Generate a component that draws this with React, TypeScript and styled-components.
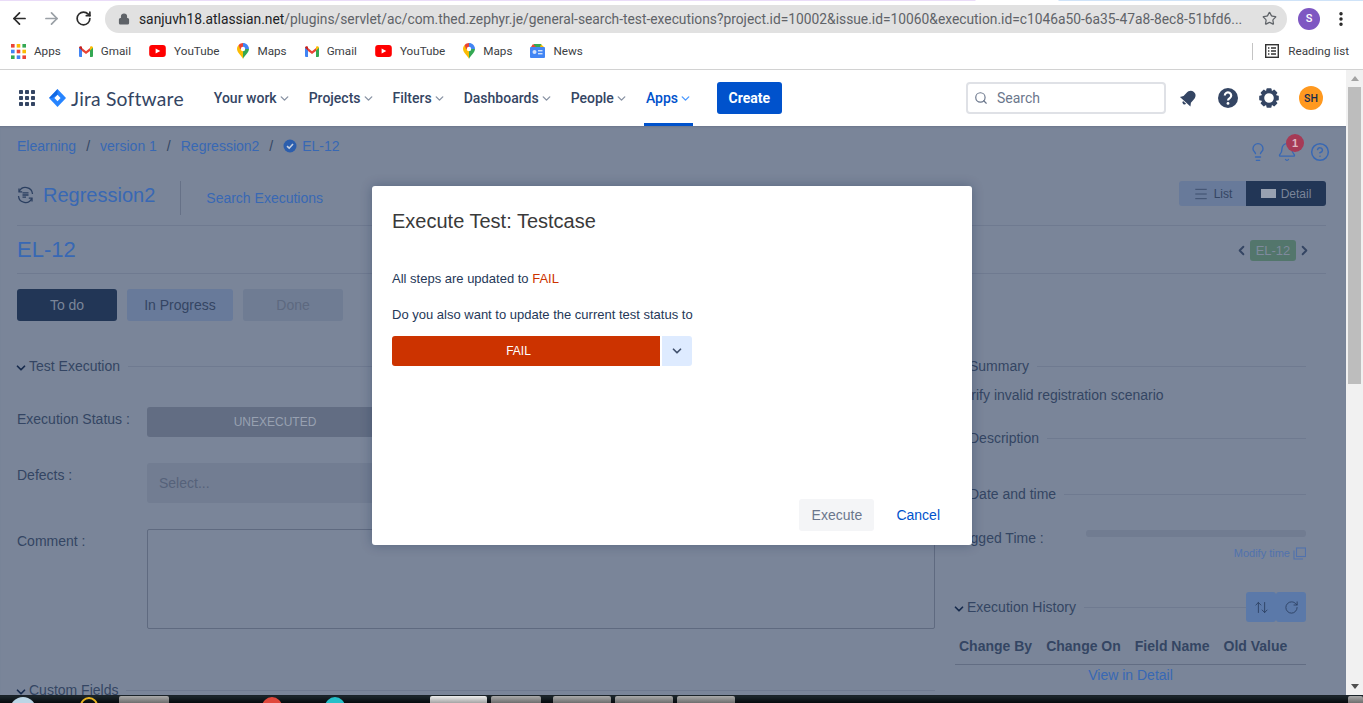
import React from "react";
import styled, { createGlobalStyle } from "styled-components";
import { ArrowLeft, ArrowRight, RotateCw, Lock, Star, MoreVertical, ChevronDown, ChevronLeft, ChevronRight, Search, HelpCircle, Bell, Lightbulb, Menu, ArrowUpDown, RotateCw as Refresh } from "lucide-react";

const Global = createGlobalStyle`
  html, body { margin: 0; padding: 0; height: 100%; overflow: hidden; background: #fff; }
  * { box-sizing: border-box; }
`;

const Screen = styled.div`
  position: relative; width: 1363px; height: 703px; overflow: hidden; display: flex; flex-direction: column;
  font-family: "Liberation Sans", Arial, sans-serif; background: #fff;
`;
const TopTint = styled.div`
  height: 1px; flex: none;
  background: linear-gradient(90deg, #eadcf8 0, #eadcf8 975px, #fff 976px, #fff 1058px, #cfe3f8 1059px, #cfe3f8 100%);
`;
const Toolbar = styled.div`
  height: 35px; flex: none; display: flex; align-items: center; padding: 0 0 0 6px; background: #fff; color: #333;
`;
const NavIcon = styled.span<{ $muted?: boolean }>`
  width: 26px; height: 26px; margin-right: 6px; display: flex; align-items: center; justify-content: center;
  color: ${(p) => (p.$muted ? "#9aa0a6" : "#2b2b2b")};
`;
const Omnibox = styled.div`
  width: 1182px; height: 28px; margin-left: 3px; border-radius: 14px; background: #e1e1e1; display: flex; align-items: center;
  padding-left: 13px; padding-right: 10px; color: #5f6368; font: 400 13.8px Roboto, sans-serif; white-space: nowrap;
`;
const Url = styled.span`
  margin-left: 9px; flex: 1; overflow: hidden;
  b { font-weight: 400; color: #202124; }
`;
const Profile = styled.span`
  width: 22px; height: 22px; border-radius: 50%; background: #7e57c2; color: #fff; margin-left: 11px;
  display: flex; align-items: center; justify-content: center; font: 500 11px Roboto, sans-serif;
`;
const Kebab = styled.span`
  margin-left: 12px; color: #222; display: flex;
`;
const Bookmarks = styled.div`
  height: 34px; flex: none; display: flex; align-items: center; padding: 0 14px 3px 11px; gap: 18px; background: #fff;
  border-bottom: 1px solid #d2d2d2; font: 400 11.7px Roboto, sans-serif; color: #3c4043;
`;
const Mark = styled.span`
  display: flex; align-items: center; gap: 8px; white-space: nowrap;
`;
const ReadingList = styled.span`
  margin-left: auto; height: 17px; border-left: 1px solid #c4c4c4; padding-left: 12px; display: flex; align-items: center; gap: 9px;
`;
const Workspace = styled.div`
  flex: 1; min-height: 0; display: flex;
`;
const Window = styled.div`
  flex: 1; min-width: 0; display: flex; flex-direction: column;
`;
const JiraNav = styled.header`
  height: 56px; flex: none; background: #fff; display: flex; align-items: center; padding-left: 19px;
  font: 500 14px Roboto, sans-serif; color: #344563; position: relative;
`;
const LogoWrap = styled.div`
  display: flex; align-items: center; margin-left: 14px; margin-right: 30px;
`;
const LogoText = styled.span`
  font: 400 19.3px Lato, sans-serif; color: #344563; margin-left: 5px; letter-spacing: 0.2px;
`;
const Menus = styled.nav`
  display: flex; align-items: stretch; height: 56px; gap: 18px;
`;
const MenuItem = styled.span<{ $active?: boolean }>`
  display: flex; align-items: center; gap: 1px; white-space: nowrap; position: relative; width: ${(p) => (p.$active ? "47px" : "auto")};
  color: ${(p) => (p.$active ? "#0052cc" : "#344563")};
  svg { color: ${(p) => (p.$active ? "#4c9aff" : "#8993a4")}; }
  ${(p) => p.$active && `&::after { content: ""; position: absolute; left: -2px; right: 0; bottom: 0; height: 3px; background: #0052cc; }`}
`;
const CreateBtn = styled.span`
  width: 65px; height: 32px; margin-left: 24px; background: #0052cc; color: #fff; border-radius: 3px; display: flex;
  align-items: center; justify-content: center; font-weight: 700; font-size: 14px;
`;
const SearchBox = styled.div`
  width: 200px; height: 32px; margin-left: auto; border: 2px solid #dfe1e6; border-radius: 4px; display: flex; align-items: center;
  padding-left: 6px; gap: 9px; font: 400 14px Roboto, sans-serif; color: #6b778c;
`;
const NavActions = styled.div`
  display: flex; align-items: center; margin-left: 13px; width: 167px; color: #344563; gap: 19px;
`;
const AvatarSH = styled.span`
  width: 24px; height: 24px; border-radius: 50%; background: #ff991f; color: #172b4d; font: 500 10.5px Roboto, sans-serif;
  display: flex; align-items: center; justify-content: center;
`;
const Page = styled.main`
  flex: 1; min-height: 0; overflow: hidden; background: #7a8599; padding: 0 20px 0 17px; color: #344563; font-size: 14px;
  box-shadow: inset 0 2px 2px -1px #6c778c;
`;
const Crumbs = styled.div`
  height: 40px; display: flex; align-items: center; color: #3868b4; white-space: nowrap;
`;
const CrumbSep = styled.span`
  margin: 0 10px; color: #344563;
`;
const CrumbTail = styled.span`
  display: flex; align-items: center; gap: 5px;
`;
const CornerIcons = styled.div`
  margin-left: auto; margin-right: -4px; display: flex; align-items: center; gap: 9px; color: #3868b4; margin-top: 12px; position: relative;
  svg:last-child { margin-left: 4px; }
`;
const Badge = styled.span`
  position: absolute; left: 38px; top: -8px; width: 18px; height: 18px; border-radius: 50%; background: #a63a56; color: #dfb6c0;
  font-size: 11px; font-weight: 700; display: flex; align-items: center; justify-content: center;
`;
const HeadRow = styled.div`
  height: 60px; border-bottom: 1px solid #6f7a90; display: flex; align-items: flex-start; padding-top: 15px;
`;
const HeadTitle = styled.div`
  display: flex; align-items: center; gap: 9px; font-size: 20px; color: #3868b4; height: 34px; padding: 0 25px 6px 0; border-right: 1px solid #667187;
`;
const HeadLink = styled.span`
  margin: 9px 0 0 25px; color: #3868b4; line-height: 16px;
`;
const Segment = styled.div`
  margin-left: auto; display: flex; height: 25px; font-size: 12px; border-radius: 3px; overflow: hidden;
`;
const SegBtn = styled.span<{ $on?: boolean }>`
  width: ${(p) => (p.$on ? "80px" : "67px")}; display: flex; align-items: center; justify-content: center; gap: 5px;
  background: ${(p) => (p.$on ? "#223656" : "#687a9a")}; color: ${(p) => (p.$on ? "#7a8599" : "#344563")};
`;
const DetailGlyph = styled.span`
  width: 15px; height: 9px; background: #98a1b1;
`;
const IssueRow = styled.div`
  height: 48px; border-bottom: 1px solid #6f7a90; display: flex; align-items: center; color: #3868b4; font-size: 22px;
  padding-right: 14px;
`;
const Pager = styled.div`
  margin-left: auto; margin-top: 2px; display: flex; align-items: center; gap: 1px; color: #344563;
`;
const Lozenge = styled.span`
  width: 46px; height: 21px; background: #53766c; color: #7f8a9d; border-radius: 3px; font-size: 13px;
  display: flex; align-items: center; justify-content: center;
`;
const StatusRow = styled.div`
  display: flex; gap: 10px; margin-top: 15px;
`;
const StatusBtn = styled.span<{ $v: "dark" | "mid" | "off" }>`
  width: ${(p) => (p.$v === "mid" ? "106px" : "100px")}; height: 32px; border-radius: 3px; display: flex; align-items: center; justify-content: center;
  background: ${(p) => (p.$v === "dark" ? "#223656" : p.$v === "mid" ? "#687a9a" : "#6f7c93")};
  color: ${(p) => (p.$v === "dark" ? "#7a8599" : p.$v === "mid" ? "#344563" : "#5d6980")};
`;
const Columns = styled.div`
  display: flex; gap: 20px; margin-top: 34px;
`;
const LeftCol = styled.section`
  width: 918px; flex: none;
`;
const RightCol = styled.section`
  width: 351px; flex: none;
`;
const SectionHead = styled.div<{ $mt?: number; $indent?: number }>`
  height: 22px; display: flex; align-items: center; gap: 8px; white-space: nowrap; color: #344563;
  margin-top: ${(p) => p.$mt ?? 0}px; padding-left: ${(p) => p.$indent ?? 0}px;
  &::after { content: ""; flex: 1; height: 1px; background: #6f7a90; }
`;
const Caret = styled.span`
  display: inline-flex; margin: 3px -7px 0 -3px; color: #172b4d;
`;
const FieldRow = styled.div<{ $h: number; $mt: number }>`
  display: flex; height: ${(p) => p.$h}px; margin-top: ${(p) => p.$mt}px;
`;
const FieldLabel = styled.label`
  width: 130px; flex: none; padding-top: 4px;
`;
const StatusField = styled.span`
  width: 256px; height: 30px; background: #626d83; color: #98a1b1; border-radius: 3px; font-size: 12px; display: flex; align-items: center; justify-content: center;
`;
const SelectField = styled.span`
  width: 400px; height: 40px; background: #727d92; color: #56627a; border-radius: 3px; padding-left: 12px; display: flex; align-items: center;
`;
const Textarea = styled.div`
  width: 788px; height: 100px; border: 1px solid #5f6a80; border-radius: 2px;
`;
const SummaryText = styled.p`
  margin: 10px 0 0 0; height: 22px; white-space: nowrap; color: #344563;
`;
const LoggedRow = styled.div`
  display: flex; align-items: flex-start; margin-top: 25px; height: 22px;
`;
const LoggedLabel = styled.span`
  width: 131px; flex: none;
`;
const TimeBar = styled.span`
  flex: 1; height: 7px; margin-top: 0; border-radius: 3px; background: #717c91;
`;
const ModifyRow = styled.div`
  display: flex; justify-content: flex-end; align-items: center; gap: 3px; color: #5172ad; font-size: 11px; height: 16px; margin-top: -7px;
`;
const HistoryHead = styled.div`
  display: flex; align-items: center; height: 30px; margin-top: 31px; gap: 8px;
`;
const HistLine = styled.span`
  flex: 1; height: 1px; background: #6f7a90; margin-right: -8px;
`;
const IconBtn = styled.span<{ $joined?: boolean }>`
  width: 30px; height: 30px; background: #5b79a9; border-radius: 3px; display: flex; align-items: center; justify-content: center; color: #2b3f60;
  margin-left: ${(p) => (p.$joined ? "-8px" : "0")};
`;
const HistoryTable = styled.div`
  display: flex; gap: 14px; padding-left: 4px; margin-top: 15px; height: 28px; font-weight: 700; border-bottom: 1px solid #626d83; white-space: nowrap; padding-top: 1px; color: #344563; align-items: flex-start;
`;
const ViewDetail = styled.div`
  text-align: center; color: #3868b4; padding-top: 2px;
`;
const ScrollTrack = styled.div`
  width: 17px; flex: none; background: #f1f1f1; display: flex; flex-direction: column; align-items: center; position: relative;
`;
const ScrollThumb = styled.div`
  width: 13px; margin-top: 17px; height: 297px; background: #bdbdbd;
`;
const ArrowUp = styled.span`
  position: absolute; top: 6px; left: 5px; width: 0; height: 0; border: 4px solid transparent; border-top: 0; border-bottom: 5px solid #a3a3a3;
`;
const ArrowDown = styled.span`
  position: absolute; bottom: 6px; left: 5px; width: 0; height: 0; border: 4px solid transparent; border-bottom: 0; border-top: 5px solid #505050;
`;
const Taskbar = styled.div`
  height: 8px; flex: none; border-top: 1px solid #1a2228; background: linear-gradient(#1c262c, #060a0d); overflow: hidden; position: relative;
`;
const Tab = styled.span<{ $x: number; $w: number; $light?: boolean }>`
  position: absolute; left: ${(p) => p.$x}px; top: 0; width: ${(p) => p.$w}px; height: 8px; border-radius: 2px 2px 0 0;
  background: ${(p) => (p.$light ? "linear-gradient(#eee,#999)" : "linear-gradient(#aaa,#666)")};
`;
const Dot = styled.span<{ $x: number; $c: string; $s?: number; $ring?: boolean }>`
  position: absolute; left: ${(p) => p.$x}px; top: 1px; width: ${(p) => p.$s ?? 20}px; height: ${(p) => p.$s ?? 20}px; border-radius: 50%;
  ${(p) => (p.$ring ? `border: 2px solid ${p.$c};` : `background: ${p.$c};`)}
`;
const Modal = styled.div`
  position: absolute; left: 372px; top: 186px; width: 600px; height: 359px; background: #fff; border-radius: 3px;
  box-shadow: 0 0 12px rgba(9, 30, 66, 0.3); padding: 23px 20px 0; display: flex; flex-direction: column; color: #172b4d;
`;
const ModalTitle = styled.h2`
  margin: 0; font: 400 20px "Liberation Sans", Arial, sans-serif; color: #3a3a3a; height: 24px; line-height: 24px;
`;
const ModalText = styled.p<{ $mt: number }>`
  margin: ${(p) => p.$mt}px 0 0; line-height: 14px; font-size: 13px; color: #253858; white-space: nowrap;
  span { color: #cc3300; }
`;
const FailRow = styled.div`
  display: flex; width: 300px; height: 30px; margin-top: 14px; gap: 2px;
`;
const FailBtn = styled.span`
  flex: 1; background: #cc3300; color: #fff; border-radius: 3px 0 0 3px; display: flex; align-items: center; justify-content: center; font-size: 12px; padding-right: 15px;
`;
const FailCaret = styled.span`
  width: 30px; background: #deebff; border-radius: 0 3px 3px 0; display: flex; align-items: center; justify-content: center; color: #42526e;
`;
const ModalFoot = styled.div`
  margin-top: auto; display: flex; justify-content: flex-end; align-items: center; padding-bottom: 14px; padding-right: 12px; gap: 22px; font-size: 14px;
`;
const ExecuteBtn = styled.span`
  width: 75px; height: 32px; background: #f4f5f7; color: #6b778c; border-radius: 3px; display: flex; align-items: center; justify-content: center;
`;
const CancelBtn = styled.span`
  color: #0052cc;
`;

const Gmail = () => (
  <svg width="14" height="11" viewBox="0 0 14 11">
    <path d="M0 1.5 L3 3 V11 H1 A1 1 0 0 1 0 10Z" fill="#4285f4" />
    <path d="M14 1.5 L11 3 V11 H13 A1 1 0 0 0 14 10Z" fill="#34a853" />
    <path d="M3 5 V2 L7 5.2 L11 2 V5 L7 8Z" fill="#ea4335" />
    <path d="M0 1.8 C0 .4 1.5 -.3 2.6 .5 L3 1 V4.6Z" fill="#c5221f" />
    <path d="M14 1.8 C14 .4 12.5 -.3 11.4 .5 L11 1 V4.6Z" fill="#fbbc04" />
  </svg>
);
const YouTube = () => (
  <svg width="17" height="12" viewBox="0 0 18 13">
    <rect width="18" height="13" rx="3.2" fill="#f00" />
    <path d="M7 3.7 L12 6.5 L7 9.3Z" fill="#fff" />
  </svg>
);
const MapsPin = () => (
  <svg width="12" height="16" viewBox="0 0 12 16">
    <path d="M6 16 C5 13 0 9.6 0 6 C0 4.4.6 3 1.7 1.9 L6 6Z" fill="#fbbc04" />
    <path d="M1.7 1.9 C2.8.7 4.3 0 6 0 L6 6 L3 6Z" fill="#ea4335" />
    <path d="M6 0 C9.3 0 12 2.7 12 6 L6 6Z" fill="#4285f4" />
    <path d="M6 16 C7 13 12 9.6 12 6 L6 6Z" fill="#34a853" />
    <circle cx="6" cy="6" r="2.2" fill="#fff" />
  </svg>
);
const NewsIcon = () => (
  <svg width="15" height="14" viewBox="0 0 15 14">
    <path d="M2 3 L4 0 H11 L13 3Z" fill="#34a853" />
    <path d="M3 0 L6 3 H1Z" fill="#ea4335" />
    <path d="M11 0.5 L14 3 H10Z" fill="#fbbc04" />
    <rect y="3" width="15" height="11" rx="1" fill="#4285f4" />
    <rect x="2.5" y="6" width="4" height="4" rx="2" fill="#cfe0fb" />
    <rect x="8" y="6" width="4.5" height="1.4" fill="#cfe0fb" />
    <rect x="8" y="9" width="4.5" height="1.4" fill="#cfe0fb" />
  </svg>
);
const AppsGrid = ({ size = 15, mono }: { size?: number; mono?: string }) => {
  const colors = ["#ea4335", "#fbbc04", "#34a853", "#4285f4", "#ea4335", "#fbbc04", "#34a853", "#4285f4", "#ea4335"];
  const s = size === 15 ? 3.6 : 4;
  const g = (size - s * 3) / 2;
  return (
    <svg width={size} height={size} viewBox={`0 0 ${size} ${size}`}>
      {colors.map((c, i) => (
        <rect key={i} x={(i % 3) * (s + g)} y={Math.floor(i / 3) * (s + g)} width={s} height={s} rx={mono ? 0.8 : 0} fill={mono ?? c} />
      ))}
    </svg>
  );
};
const Diamond = () => (
  <svg width="17" height="18" viewBox="0 0 17 18">
    <path d="M8.5 0 L17 9 L8.5 18 L0 9Z" fill="#2684ff" />
    <path d="M8.5 5.8 L11.6 9 L8.5 12.2 L5.4 9Z" fill="#fff" />
    <path d="M8.5 0 L0 9 L3 9 L8.5 5.8Z" fill="#0052cc" opacity="0.55" />
  </svg>
);
const ReadingIcon = () => (
  <svg width="14" height="14" viewBox="0 0 14 14" fill="none" stroke="#333" strokeWidth="1.4">
    <rect x=".7" y=".7" width="12.6" height="12.6" />
    <path d="M3 4H4.4M6 4H11M3 7H4.4M6 7H11M3 10H4.4M6 10H11" />
  </svg>
);
const TiltedBell = () => (
  <svg width="19" height="20" viewBox="0 0 20 20" fill="#344563">
    <g transform="rotate(42 10 10)">
      <path d="M10 1.5 C6.4 1.5 4.8 4.2 4.8 7.5 V12 L2.6 15.2 H17.4 L15.2 12 V7.5 C15.2 4.2 13.6 1.5 10 1.5Z" />
      <path d="M7.8 16.2 A2.2 2.2 0 0 0 12.2 16.2Z" />
    </g>
  </svg>
);
const HelpDisc = () => (
  <svg width="22" height="22" viewBox="0 0 22 22">
    <circle cx="11" cy="11" r="10" fill="#344563" />
    <path d="M7.8 8.6 A3.2 3.2 0 1 1 12.8 11.2 C11.6 12 11 12.4 11 13.6" fill="none" stroke="#fff" strokeWidth="2.2" />
    <circle cx="11" cy="16.4" r="1.4" fill="#fff" />
  </svg>
);
const Gear = () => (
  <svg width="22" height="22" viewBox="0 0 22 22" fill="#344563">
    {[0, 45, 90, 135, 180, 225, 270, 315].map((a) => (
      <rect key={a} x="8.4" y="1.2" width="5.2" height="4.4" rx="1" transform={`rotate(${a} 11 11)`} />
    ))}
    <circle cx="11" cy="11" r="6.4" fill="none" stroke="#344563" strokeWidth="3.2" />
  </svg>
);
const CycleIcon = () => (
  <svg width="17" height="18" viewBox="0 0 17 18" fill="none" stroke="#2b3f60" strokeWidth="1.3">
    <path d="M2.2 5.5 A7 7 0 0 1 15.5 8" />
    <path d="M14.8 12.5 A7 7 0 0 1 1.5 10" />
    <path d="M2 2.5 V5.8 H5.2 M15 15.5 V12.2 H11.8" />
    <path d="M5.5 6.8 H11.5 M5.5 9 H11.5 M5.5 11.2 H9" />
  </svg>
);
const CheckBadge = () => (
  <svg width="14" height="14" viewBox="0 0 14 14">
    <circle cx="7" cy="7" r="6.5" fill="#2c5ead" />
    <path d="M4 7.2 L6.2 9.2 L10 5" fill="none" stroke="#c8d0de" strokeWidth="1.6" />
  </svg>
);
const ModifyIcon = () => (
  <svg width="13" height="13" viewBox="0 0 13 13" fill="none" stroke="#5172ad" strokeWidth="1.1">
    <rect x="3.5" y="1" width="9" height="8.5" />
    <path d="M1 3.5 V12 H10" />
  </svg>
);

const bookmarks: [React.ReactNode, string][] = [
  [<AppsGrid />, "Apps"],
  [<Gmail />, "Gmail"],
  [<YouTube />, "YouTube"],
  [<MapsPin />, "Maps"],
  [<Gmail />, "Gmail"],
  [<YouTube />, "YouTube"],
  [<MapsPin />, "Maps"],
  [<NewsIcon />, "News"],
];
const menus = ["Your work", "Projects", "Filters", "Dashboards", "People"];

export default function App() {
  return (
    <Screen>
      <Global />
      <TopTint />
      <Toolbar>
        <NavIcon><ArrowLeft size={19} strokeWidth={2.2} /></NavIcon>
        <NavIcon $muted><ArrowRight size={19} strokeWidth={2.2} /></NavIcon>
        <NavIcon><RotateCw size={17} strokeWidth={2.4} /></NavIcon>
        <Omnibox>
          <Lock size={12} fill="#5f6368" strokeWidth={2.4} />
          <Url><b>sanjuvh18.atlassian.net</b>/plugins/servlet/ac/com.thed.zephyr.je/general-search-test-executions?project.id=10002&amp;issue.id=10060&amp;execution.id=c1046a50-6a35-47a8-8ec8-51bfd6...</Url>
          <Star size={15} />
        </Omnibox>
        <Profile>S</Profile>
        <Kebab><MoreVertical size={18} strokeWidth={2.6} /></Kebab>
      </Toolbar>
      <Bookmarks>
        {bookmarks.map(([icon, label], i) => (
          <Mark key={i}>{icon}{label}</Mark>
        ))}
        <ReadingList><ReadingIcon />Reading list</ReadingList>
      </Bookmarks>
      <Workspace>
        <Window>
          <JiraNav>
            <AppsGrid size={16} mono="#344563" />
            <LogoWrap><Diamond /><LogoText>Jira Software</LogoText></LogoWrap>
            <Menus>
              {menus.map((m) => (
                <MenuItem key={m}>{m}<ChevronDown size={13} strokeWidth={2.6} /></MenuItem>
              ))}
              <MenuItem $active>Apps<ChevronDown size={13} strokeWidth={2.6} /></MenuItem>
            </Menus>
            <CreateBtn>Create</CreateBtn>
            <SearchBox><Search size={14} />Search</SearchBox>
            <NavActions>
              <TiltedBell />
              <HelpDisc />
              <Gear />
              <AvatarSH>SH</AvatarSH>
            </NavActions>
          </JiraNav>
          <Page>
            <Crumbs>
              Elearning<CrumbSep>/</CrumbSep>version 1<CrumbSep>/</CrumbSep>Regression2<CrumbSep>/</CrumbSep>
              <CrumbTail><CheckBadge />EL-12</CrumbTail>
              <CornerIcons>
                <Lightbulb size={20} strokeWidth={1.6} />
                <Bell size={20} strokeWidth={1.6} />
                <Badge>1</Badge>
                <HelpCircle size={20} strokeWidth={1.8} />
              </CornerIcons>
            </Crumbs>
            <HeadRow>
              <HeadTitle><CycleIcon />Regression2</HeadTitle>
              <HeadLink>Search Executions</HeadLink>
              <Segment>
                <SegBtn><Menu size={16} strokeWidth={1.2} />List</SegBtn>
                <SegBtn $on><DetailGlyph />Detail</SegBtn>
              </Segment>
            </HeadRow>
            <IssueRow>
              EL-12
              <Pager>
                <ChevronLeft size={15} strokeWidth={3} />
                <Lozenge>EL-12</Lozenge>
                <ChevronRight size={15} strokeWidth={3} />
              </Pager>
            </IssueRow>
            <StatusRow>
              <StatusBtn $v="dark">To do</StatusBtn>
              <StatusBtn $v="mid">In Progress</StatusBtn>
              <StatusBtn $v="off">Done</StatusBtn>
            </StatusRow>
            <Columns>
              <LeftCol>
                <SectionHead><Caret><ChevronDown size={14} strokeWidth={3} /></Caret>Test Execution</SectionHead>
                <FieldRow $h={30} $mt={30}>
                  <FieldLabel>Execution Status :</FieldLabel>
                  <StatusField>UNEXECUTED</StatusField>
                </FieldRow>
                <FieldRow $h={40} $mt={26}>
                  <FieldLabel>Defects :</FieldLabel>
                  <SelectField>Select...</SelectField>
                </FieldRow>
                <FieldRow $h={100} $mt={26}>
                  <FieldLabel>Comment :</FieldLabel>
                  <Textarea />
                </FieldRow>
                <SectionHead $mt={50}><Caret><ChevronDown size={14} strokeWidth={3} /></Caret>Custom Fields</SectionHead>
              </LeftCol>
              <RightCol>
                <SectionHead $indent={14}>Summary</SectionHead>
                <SummaryText>Verify invalid registration scenario</SummaryText>
                <SectionHead $mt={18} $indent={14}>Description</SectionHead>
                <SectionHead $mt={34} $indent={14}>Date and time</SectionHead>
                <LoggedRow>
                  <LoggedLabel>Logged Time :</LoggedLabel>
                  <TimeBar />
                </LoggedRow>
                <ModifyRow>Modify time<ModifyIcon /></ModifyRow>
                <HistoryHead>
                  <Caret><ChevronDown size={14} strokeWidth={3} /></Caret>
                  <span>Execution History</span>
                  <HistLine />
                  <IconBtn><ArrowUpDown size={15} strokeWidth={1.4} /></IconBtn>
                  <IconBtn $joined><Refresh size={15} strokeWidth={1.4} /></IconBtn>
                </HistoryHead>
                <HistoryTable>
                  <span>Change By</span><span>Change On</span><span>Field Name</span><span>Old Value</span>
                </HistoryTable>
                <ViewDetail>View in Detail</ViewDetail>
              </RightCol>
            </Columns>
          </Page>
        </Window>
        <ScrollTrack>
          <ArrowUp />
          <ScrollThumb />
          <ArrowDown />
        </ScrollTrack>
      </Workspace>
      <Taskbar>
        <Dot $x={10} $c="#bcd6e6" $s={26} />
        <Dot $x={80} $c="#e8b320" $s={18} $ring />
        <Tab $x={119} $w={50} />
        <Dot $x={262} $c="#e0483c" />
        <Dot $x={325} $c="#26c0c9" />
        <Tab $x={430} $w={57} $light />
        <Tab $x={491} $w={50} />
        <Tab $x={553} $w={58} />
        <Tab $x={615} $w={58} />
        <Tab $x={677} $w={58} />
        <Tab $x={1348} $w={15} />
      </Taskbar>
      <Modal>
        <ModalTitle>Execute Test: Testcase</ModalTitle>
        <ModalText $mt={39}>All steps are updated to <span>FAIL</span></ModalText>
        <ModalText $mt={22}>Do you also want to update the current test status to</ModalText>
        <FailRow>
          <FailBtn>FAIL</FailBtn>
          <FailCaret><ChevronDown size={14} strokeWidth={3} /></FailCaret>
        </FailRow>
        <ModalFoot>
          <ExecuteBtn>Execute</ExecuteBtn>
          <CancelBtn>Cancel</CancelBtn>
        </ModalFoot>
      </Modal>
    </Screen>
  );
}
